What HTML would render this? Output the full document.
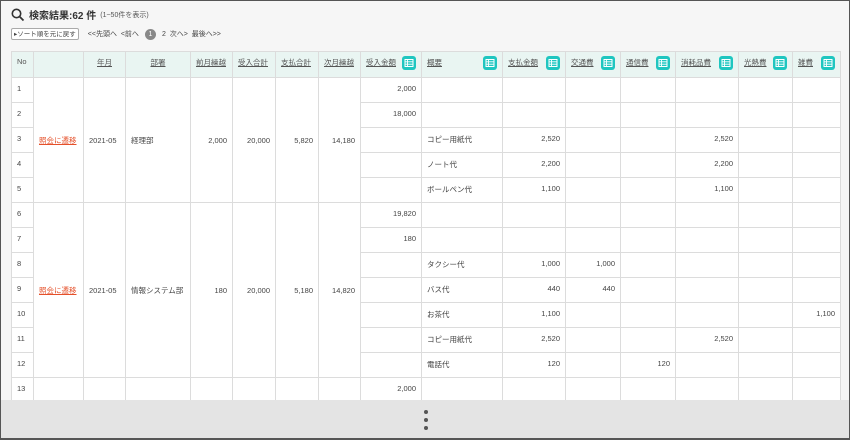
<!DOCTYPE html>
<html><head><meta charset="utf-8"><style>
*{margin:0;padding:0;box-sizing:border-box}
body{width:850px;height:440px;overflow:hidden;background:#f6f6f6;font-family:"Liberation Sans","Noto Sans CJK JP",sans-serif;color:#444;position:relative}
.frame{position:absolute;left:0;top:0;width:850px;height:440px;border:1px solid #555;border-bottom:2px solid #555;pointer-events:none;z-index:10}
.title{position:absolute;left:11px;top:7px;font-size:10px;font-weight:bold;color:#333;display:flex;align-items:center}
.title small{font-size:7px;font-weight:normal;margin-left:4px;color:#555}
.nav{position:absolute;left:11px;top:28px;font-size:7px;color:#444;display:flex;align-items:center}
.btn{border:1px solid #aaa;border-radius:2px;background:#fff;padding:1px 2px;height:12px;line-height:9px;margin-right:9px;font-size:6.5px}
.pg{width:11px;height:11px;border-radius:50%;background:#888;color:#fff;text-align:center;line-height:11px;margin:0 6px}
table{position:absolute;left:11px;top:51px;border-collapse:collapse;table-layout:fixed;background:#fff;font-size:7.5px}
td,th{border:1px solid #dcdcdc;height:25px;padding:0 5px;white-space:nowrap;overflow:hidden}
th{background:#e9f5f2;height:26px;font-weight:normal;text-align:left;vertical-align:top;padding-top:5px;text-decoration:underline;color:#555}
th.c{text-align:center}
th.n{text-decoration:none}
.r{text-align:right}
td{vertical-align:top;padding-top:6px}
td.m{vertical-align:middle;padding-top:0}
.lk{color:#e5502a;text-decoration:underline}
.ic{float:right;width:14px;height:14px;margin-top:-1px;display:block}
.bar{position:absolute;left:1px;top:400px;width:848px;height:38px;background:#e4e4e4}
.dot{position:absolute;left:423px;width:4px;height:4px;border-radius:50%;background:#555}
</style></head><body>
<svg width="0" height="0" style="position:absolute"><defs><symbol id="ic" viewBox="0 0 14 14"><rect width="14" height="14" rx="3" fill="#1fc6c0"/><rect x="3" y="3.5" width="8" height="7" fill="none" stroke="#fff" stroke-width="1"/><path d="M3 5.8H11M3 8.2H11M5.5 3.5V10.5" stroke="#fff" stroke-width="0.9"/></symbol></defs></svg>
<div class="title"><svg width="14" height="14" viewBox="0 0 14 14" style="margin-right:4px"><circle cx="5.5" cy="5.5" r="4.2" fill="none" stroke="#333" stroke-width="1.6"/><line x1="8.5" y1="8.5" x2="12.5" y2="12.5" stroke="#333" stroke-width="1.8"/></svg>検索結果:62 件<small>(1~50件を表示)</small></div>
<div class="nav"><span class="btn">▸ソート順を元に戻す</span><span>&lt;&lt;先頭へ</span>&nbsp;&nbsp;<span>&lt;前へ</span><span class="pg">1</span><span>2</span>&nbsp;&nbsp;<span>次へ&gt;</span>&nbsp;&nbsp;<span>最後へ&gt;&gt;</span></div>
<table>
<colgroup><col style="width:22px"><col style="width:50px"><col style="width:42px"><col style="width:65px"><col style="width:42px"><col style="width:43px"><col style="width:43px"><col style="width:42px"><col style="width:61px"><col style="width:81px"><col style="width:63px"><col style="width:55px"><col style="width:55px"><col style="width:63px"><col style="width:54px"><col style="width:48px"></colgroup>
<tr><th class="n">No</th><th class="n"></th><th class="c">年月</th><th class="c">部署</th><th>前月繰越</th><th>受入合計</th><th>支払合計</th><th>次月繰越</th><th>受入金額<svg class="ic"><use href="#ic"/></svg></th><th>概要<svg class="ic"><use href="#ic"/></svg></th><th>支払金額<svg class="ic"><use href="#ic"/></svg></th><th>交通費<svg class="ic"><use href="#ic"/></svg></th><th>通信費<svg class="ic"><use href="#ic"/></svg></th><th>消耗品費<svg class="ic"><use href="#ic"/></svg></th><th>光熱費<svg class="ic"><use href="#ic"/></svg></th><th>雑費<svg class="ic"><use href="#ic"/></svg></th></tr>
<tr><td>1</td><td rowspan="5" class="m"><span class="lk">照会に遷移</span></td><td rowspan="5" class="m">2021-05</td><td rowspan="5" class="m">経理部</td><td rowspan="5" class="m r">2,000</td><td rowspan="5" class="m r">20,000</td><td rowspan="5" class="m r">5,820</td><td rowspan="5" class="m r">14,180</td><td class="r">2,000</td><td></td><td></td><td></td><td></td><td></td><td></td><td></td></tr>
<tr><td>2</td><td class="r">18,000</td><td></td><td></td><td></td><td></td><td></td><td></td><td></td></tr>
<tr><td>3</td><td></td><td>コピー用紙代</td><td class="r">2,520</td><td></td><td></td><td class="r">2,520</td><td></td><td></td></tr>
<tr><td>4</td><td></td><td>ノート代</td><td class="r">2,200</td><td></td><td></td><td class="r">2,200</td><td></td><td></td></tr>
<tr><td>5</td><td></td><td>ボールペン代</td><td class="r">1,100</td><td></td><td></td><td class="r">1,100</td><td></td><td></td></tr>
<tr><td>6</td><td rowspan="7" class="m"><span class="lk">照会に遷移</span></td><td rowspan="7" class="m">2021-05</td><td rowspan="7" class="m">情報システム部</td><td rowspan="7" class="m r">180</td><td rowspan="7" class="m r">20,000</td><td rowspan="7" class="m r">5,180</td><td rowspan="7" class="m r">14,820</td><td class="r">19,820</td><td></td><td></td><td></td><td></td><td></td><td></td><td></td></tr>
<tr><td>7</td><td class="r">180</td><td></td><td></td><td></td><td></td><td></td><td></td><td></td></tr>
<tr><td>8</td><td></td><td>タクシー代</td><td class="r">1,000</td><td class="r">1,000</td><td></td><td></td><td></td><td></td></tr>
<tr><td>9</td><td></td><td>バス代</td><td class="r">440</td><td class="r">440</td><td></td><td></td><td></td><td></td></tr>
<tr><td>10</td><td></td><td>お茶代</td><td class="r">1,100</td><td></td><td></td><td></td><td></td><td class="r">1,100</td></tr>
<tr><td>11</td><td></td><td>コピー用紙代</td><td class="r">2,520</td><td></td><td></td><td class="r">2,520</td><td></td><td></td></tr>
<tr><td>12</td><td></td><td>電話代</td><td class="r">120</td><td></td><td class="r">120</td><td></td><td></td><td></td></tr>
<tr><td>13</td><td></td><td></td><td></td><td></td><td></td><td></td><td></td><td class="r">2,000</td><td></td><td></td><td></td><td></td><td></td><td></td><td></td></tr>
</table>
<div class="bar"><div class="dot" style="top:10px"></div><div class="dot" style="top:18px"></div><div class="dot" style="top:26px"></div></div>
<div class="frame"></div>
</body></html>
